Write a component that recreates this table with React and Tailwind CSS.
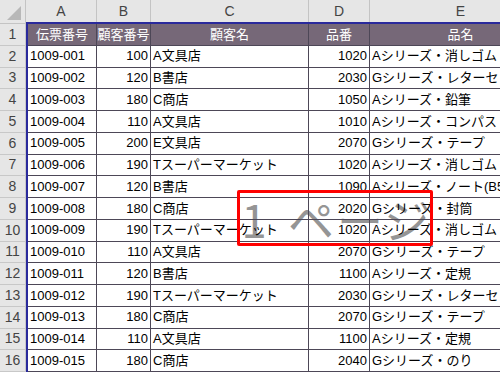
import React from "react";

const rows = [
  ["1009-001", "100", "A文具店", "1020", "Aシリーズ・消しゴム"],
  ["1009-002", "120", "B書店", "2030", "Gシリーズ・レターセット"],
  ["1009-003", "180", "C商店", "1050", "Aシリーズ・鉛筆"],
  ["1009-004", "110", "A文具店", "1010", "Aシリーズ・コンパス"],
  ["1009-005", "200", "E文具店", "2070", "Gシリーズ・テープ"],
  ["1009-006", "190", "Tスーパーマーケット", "1020", "Aシリーズ・消しゴム"],
  ["1009-007", "120", "B書店", "1090", "Aシリーズ・ノート(B5)"],
  ["1009-008", "180", "C商店", "2020", "Gシリーズ・封筒"],
  ["1009-009", "190", "Tスーパーマーケット", "1020", "Aシリーズ・消しゴム"],
  ["1009-010", "110", "A文具店", "2070", "Gシリーズ・テープ"],
  ["1009-011", "120", "B書店", "1100", "Aシリーズ・定規"],
  ["1009-012", "190", "Tスーパーマーケット", "2030", "Gシリーズ・レターセット"],
  ["1009-013", "180", "C商店", "2070", "Gシリーズ・テープ"],
  ["1009-014", "110", "A文具店", "1100", "Aシリーズ・定規"],
  ["1009-015", "180", "C商店", "2040", "Gシリーズ・のり"],
];

const font = { fontFamily: '"Liberation Sans", "Noto Sans CJK JP", sans-serif' };

// column header band (A..E)
const ColHead = () => (
  <div className="flex h-[24px] border-b-2 border-[#2a2a9c] bg-[#e6e6e6] text-[14px] text-[#444]">
    <div className="w-[71px] shrink-0 flex items-center justify-center border-r border-[#c4c4c4]">A</div>
    <div className="w-[54px] shrink-0 flex items-center justify-center border-r border-[#c4c4c4]">B</div>
    <div className="w-[158px] shrink-0 flex items-center justify-center border-r border-[#c4c4c4]">C</div>
    <div className="w-[61px] shrink-0 flex items-center justify-center border-r border-[#c4c4c4]">D</div>
    <div className="w-[182px] shrink-0 flex items-center justify-center border-r border-[#c4c4c4]">E</div>
  </div>
);

const cell = "shrink-0 h-full flex items-center border-r border-[#4d4757] px-[2px] overflow-hidden whitespace-nowrap";

const App = () => {
  return (
    <div className="relative w-[500px] h-[374px] overflow-hidden bg-white text-[13px] text-black" style={font}>
      {/* page number watermark, drawn under the cell text */}
      <div
        className="absolute z-0 left-[236px] top-[192px] h-[52px] flex items-center text-[46px] leading-none font-normal text-[#8a8a8a] opacity-90 whitespace-nowrap"
        style={{ fontFamily: '"Noto Sans CJK JP", sans-serif' }}
      >
        <span className="w-[36px] text-center">1</span>
        <span className="w-[14px]" />
        <span className="w-[50px] text-center">ペ</span>
        <span className="w-[48px] text-center">ー</span>
        <span className="w-[46px] text-center">ジ</span>
      </div>

      <div className="relative z-10 flex">
        {/* row numbers */}
        <div className="w-[26px] shrink-0 bg-[#e6e6e6] text-[14px] text-[#444]">
          <div className="h-[24px] border-b border-[#c4c4c4] border-r flex items-end justify-end pr-[4px] pb-[3px]">
            <svg width="14" height="14" viewBox="0 0 14 14">
              <polygon points="14,0 14,14 0,14" fill="#b8b8b8" />
            </svg>
          </div>
          {Array.from({ length: 16 }, (_, i) => (
            <div key={i} className="h-[21.75px] border-b border-r border-[#c8c8c8] flex items-center justify-center">
              {i + 1}
            </div>
          ))}
        </div>

        <div className="shrink-0">
          <ColHead />
          <div className="border-l-2 border-[#2a2a9c]">
            {/* title row */}
            <div className="flex h-[21.75px] bg-[#766878] text-white border-b border-[#4d4757]">
              <div className={`${cell} w-[69px] justify-center`}>伝票番号</div>
              <div className={`${cell} w-[54px] justify-center`}>顧客番号</div>
              <div className={`${cell} w-[158px] justify-center`}>顧客名</div>
              <div className={`${cell} w-[61px] justify-center`}>品番</div>
              <div className={`${cell} w-[182px] justify-center`}>品名</div>
            </div>
            {rows.map((r) => (
              <div key={r[0]} className="flex h-[21.75px] border-b border-[#4d4757]">
                <div className={`${cell} w-[69px]`}>{r[0]}</div>
                <div className={`${cell} w-[54px] justify-end`}>{r[1]}</div>
                <div className={`${cell} w-[158px]`}>{r[2]}</div>
                <div className={`${cell} w-[61px] justify-end`}>{r[3]}</div>
                <div className={`${cell} w-[182px]`}>{r[4]}</div>
              </div>
            ))}
          </div>
        </div>
      </div>

      <div className="absolute z-20 left-[237px] top-[190px] w-[196px] h-[56px] border-[3px] border-[#ff0000] rounded-[2px]" />
    </div>
  );
};

export default App;
